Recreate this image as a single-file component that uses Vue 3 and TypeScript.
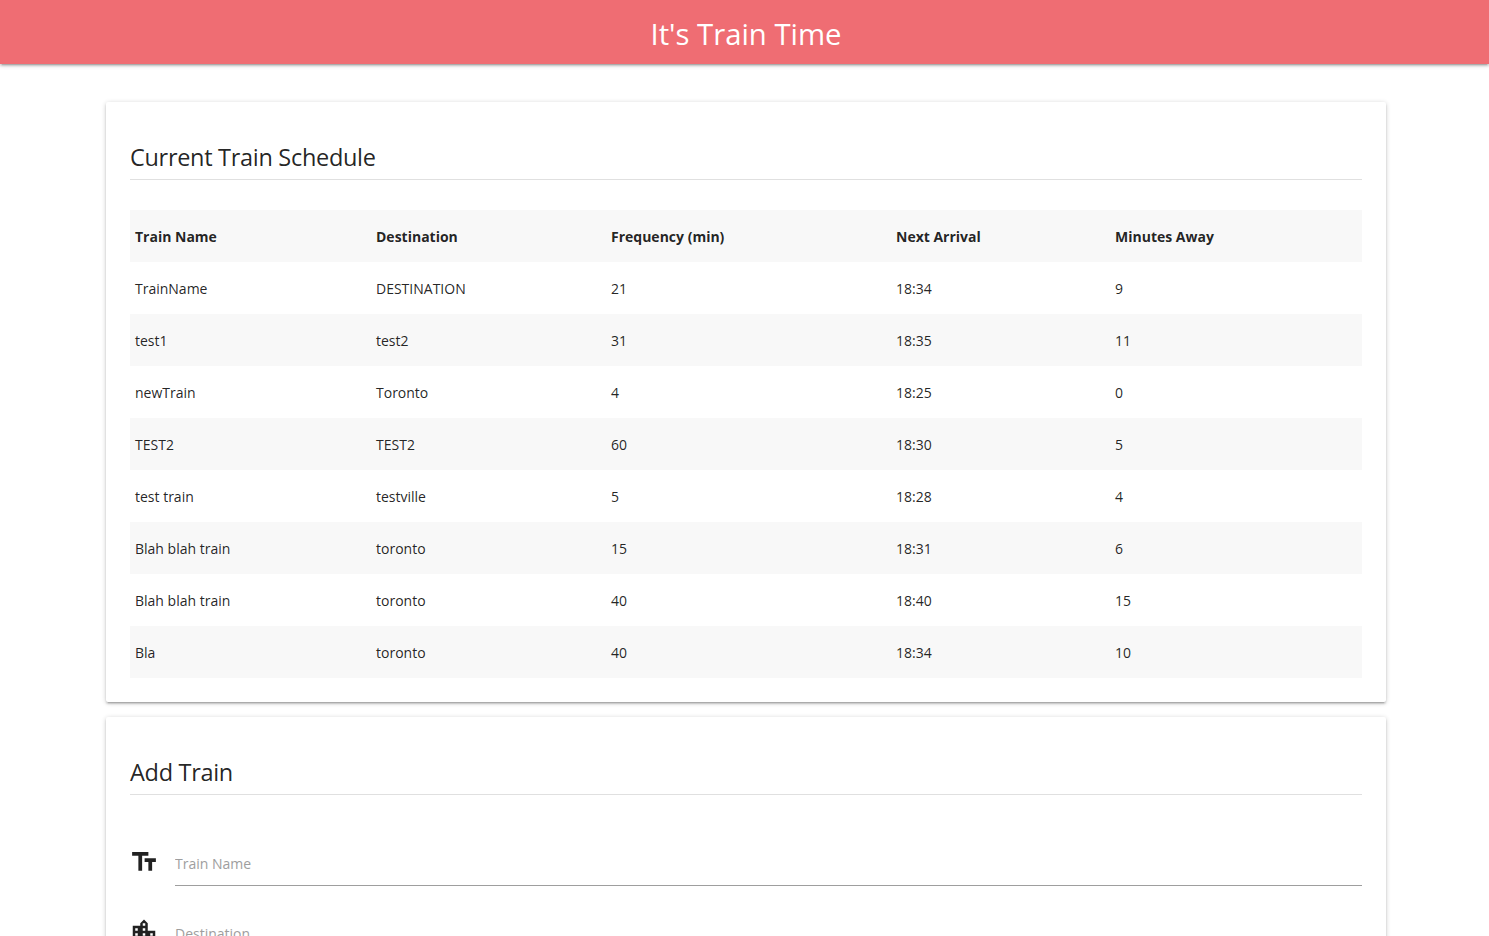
<script setup lang="ts">
interface Train {
  name: string
  destination: string
  frequency: number
  next: string
  away: number
}

const trains: Train[] = [
  { name: 'TrainName', destination: 'DESTINATION', frequency: 21, next: '18:34', away: 9 },
  { name: 'test1', destination: 'test2', frequency: 31, next: '18:35', away: 11 },
  { name: 'newTrain', destination: 'Toronto', frequency: 4, next: '18:25', away: 0 },
  { name: 'TEST2', destination: 'TEST2', frequency: 60, next: '18:30', away: 5 },
  { name: 'test train', destination: 'testville', frequency: 5, next: '18:28', away: 4 },
  { name: 'Blah blah train', destination: 'toronto', frequency: 15, next: '18:31', away: 6 },
  { name: 'Blah blah train', destination: 'toronto', frequency: 40, next: '18:40', away: 15 },
  { name: 'Bla', destination: 'toronto', frequency: 40, next: '18:34', away: 10 },
]
</script>

<template>
  <div class="page">
    <header class="topbar">
      <h1 class="brand">It's Train Time</h1>
    </header>

    <main class="container">
      <section class="card schedule">
        <h2 class="card-title">Current Train Schedule</h2>
        <table class="schedule-table">
          <colgroup>
            <col class="col-name" />
            <col class="col-dest" />
            <col class="col-freq" />
            <col class="col-next" />
            <col />
          </colgroup>
          <thead>
            <tr>
              <th>Train Name</th>
              <th>Destination</th>
              <th>Frequency (min)</th>
              <th>Next Arrival</th>
              <th>Minutes Away</th>
            </tr>
          </thead>
          <tbody>
            <tr v-for="(t, i) in trains" :key="i">
              <td>{{ t.name }}</td>
              <td>{{ t.destination }}</td>
              <td>{{ t.frequency }}</td>
              <td>{{ t.next }}</td>
              <td>{{ t.away }}</td>
            </tr>
          </tbody>
        </table>
      </section>

      <section class="card add">
        <h2 class="card-title">Add Train</h2>
        <form class="train-form">
          <div class="field">
            <svg class="prefix" viewBox="0 0 24 24" fill="currentColor">
              <path d="M2.5 4v3h5v12h3V7h5V4h-13zm19 5h-9v3h3v7h3v-7h3V9z" />
            </svg>
            <input class="text-input" type="text" placeholder="Train Name" />
          </div>
          <div class="field">
            <svg class="prefix" viewBox="0 0 24 24" fill="currentColor">
              <path d="M15 11V5l-3-3-3 3v2H3v14h18V11h-6zm-8 8H5v-2h2v2zm0-4H5v-2h2v2zm0-4H5V9h2v2zm6 8h-2v-2h2v2zm0-4h-2v-2h2v2zm0-4h-2V9h2v2zm0-4h-2V5h2v2zm6 12h-2v-2h2v2zm0-4h-2v-2h2v2z" />
            </svg>
            <input class="text-input" type="text" placeholder="Destination" />
          </div>
        </form>
      </section>
    </main>
  </div>
</template>

<style>
html,
body {
  margin: 0;
  background: #fff;
  overflow: hidden;
}
</style>

<style scoped>
.page {
  font-family: 'Open Sans', 'Noto Sans', sans-serif;
  font-size: 14px;
  color: rgba(0, 0, 0, 0.87);
}

.topbar {
  box-sizing: border-box;
  height: 64px;
  padding: 3px 0 0 3px;
  background: #ef6d73;
  box-shadow: 0 2px 2px 0 rgba(0, 0, 0, 0.14), 0 3px 1px -2px rgba(0, 0, 0, 0.12), 0 1px 5px 0 rgba(0, 0, 0, 0.2);
  display: flex;
  align-items: center;
  justify-content: center;
}

.brand {
  margin: 0;
  font-size: 29.3px;
  font-weight: 400;
  color: #fff;
}

.container {
  width: 1280px;
  margin: 38px 0 0 106px;
  display: flex;
  flex-direction: column;
  gap: 15px;
}

.card {
  background: #fff;
  border-radius: 2px;
  padding: 24px;
  box-shadow: 0 2px 2px 0 rgba(0, 0, 0, 0.14), 0 3px 1px -2px rgba(0, 0, 0, 0.12), 0 1px 5px 0 rgba(0, 0, 0, 0.2);
}

.card-title {
  margin: 0;
  height: 53px;
  line-height: 62px;
  font-size: 23.5px;
  font-weight: 400;
  letter-spacing: -0.3px;
  border-bottom: 1px solid #e0e0e0;
}

.schedule-table {
  width: 100%;
  margin-top: 30px;
  border-collapse: collapse;
  table-layout: fixed;
}

.col-name {
  width: 241px;
}

.col-dest {
  width: 235px;
}

.col-freq {
  width: 285px;
}

.col-next {
  width: 219px;
}

th,
td {
  height: 52px;
  padding: 0 5px;
  text-align: left;
  vertical-align: middle;
}

th {
  font-weight: 700;
}

thead tr,
tbody tr:nth-child(even) {
  background: #f8f8f8;
}

.train-form {
  display: flex;
  flex-direction: column;
  gap: 24px;
  padding-top: 45px;
}

.field {
  display: flex;
  align-items: flex-start;
}

.prefix {
  width: 30px;
  height: 30px;
  margin: 7px 16px 0 -1px;
  flex: none;
}

.text-input {
  flex: 1;
  box-sizing: content-box;
  height: 43px;
  padding: 2px 0 0;
  border: none;
  border-bottom: 1px solid #9e9e9e;
  font: inherit;
  font-size: 14px;
  background: transparent;
  outline: none;
}

.text-input::placeholder {
  color: #9e9e9e;
  opacity: 1;
}
</style>
